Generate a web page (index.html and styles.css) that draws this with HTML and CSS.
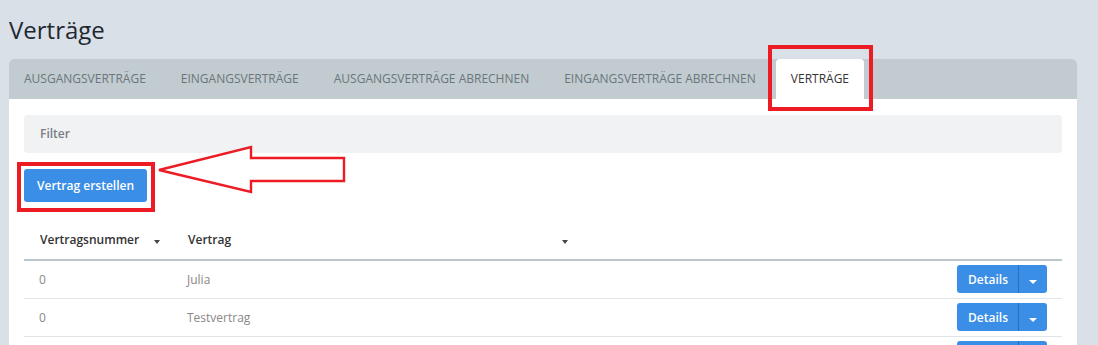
FILE: index.html
```html
<!DOCTYPE html>
<html lang="de">
<head>
  <meta charset="UTF-8" />
  <title>Verträge</title>
  <link rel="stylesheet" href="styles.css">
</head>
<body>
  <div class="page">
    <h1 class="title">Verträge</h1>

    <div class="card">
      <div class="tabs">
        <div class="tab">Ausgangsverträge</div>
        <div class="tab">Eingangsverträge</div>
        <div class="tab">Ausgangsverträge abrechnen</div>
        <div class="tab">Eingangsverträge abrechnen</div>
        <div class="tab active">Verträge</div>
      </div>

      <div class="card-body">
        <div class="filter">Filter</div>

        <div class="actions">
          <button class="btn">Vertrag erstellen</button>
        </div>

        <table class="list">
          <thead>
            <tr>
              <th class="col-nr"><span>Vertragsnummer</span><span class="caret"></span></th>
              <th class="col-name"><span>Vertrag</span><span class="caret"></span></th>
              <th></th>
            </tr>
          </thead>
          <tbody>
            <tr>
              <td>0</td>
              <td>Julia</td>
              <td class="cell-btn">
                <div class="split"><button class="split-main">Details</button><button class="split-caret"><span class="caret light"></span></button></div>
              </td>
            </tr>
            <tr>
              <td>0</td>
              <td>Testvertrag</td>
              <td class="cell-btn">
                <div class="split"><button class="split-main">Details</button><button class="split-caret"><span class="caret light"></span></button></div>
              </td>
            </tr>
            <tr>
              <td></td>
              <td></td>
              <td class="cell-btn">
                <div class="split"><button class="split-main blank"></button><button class="split-caret"></button></div>
              </td>
            </tr>
          </tbody>
        </table>
      </div>
    </div>
  </div>

  <!-- annotations drawn over the screenshot -->
  <div class="mark mark-tab"></div>
  <div class="mark mark-btn"></div>
  <svg class="arrow" width="200" height="60" viewBox="0 0 200 60">
    <polygon points="3,26 95,3 95,14 188,14 188,37 95,37 95,48" fill="#fff" stroke="#ed1c24" stroke-width="2.4"/>
  </svg>
</body>
</html>
```

FILE: styles.css
```css
* {
  box-sizing: border-box;
}

body {
  margin: 0;
  font-family: 'Open Sans', sans-serif;
  background: #d9e0e7;
  height: 345px;
  overflow: hidden;
}

.page {
  padding: 0 21px 0 9px;
}

.title {
  margin: 0;
  padding-top: 12px;
  height: 59px;
  font-size: 24px;
  font-weight: 400;
  line-height: 36px;
  color: #1f2830;
}

.card {
  background: #fff;
  border-radius: 5px;
  overflow: hidden;
  height: 400px;
}

.tabs {
  display: flex;
  background: #c1cbd0;
  height: 40px;
}

.tab {
  padding: 0 15px;
  margin-right: 5px;
  line-height: 40px;
  font-size: 12px;
  text-transform: uppercase;
  color: #6b767c;
  white-space: nowrap;
}

.tab.active {
  background: #fff;
  color: #333;
  border-radius: 4px 4px 0 0;
}

.card-body {
  padding: 16px 15px;
}

.filter {
  background: #f1f2f4;
  border-radius: 4px;
  height: 38px;
  line-height: 38px;
  padding-left: 16px;
  font-size: 12px;
  font-weight: 600;
  color: #7a7f84;
}

.actions {
  margin-top: 16px;
}

.btn {
  height: 33px;
  padding: 0 13px;
  border: none;
  border-radius: 3px;
  background: #3a8ee6;
  color: #fff;
  font-family: inherit;
  font-size: 12px;
  font-weight: 600;
}

.list {
  width: 100%;
  border-collapse: collapse;
  margin-top: 17px;
  font-size: 12px;
}

.list th {
  text-align: left;
  font-weight: 600;
  color: #333;
  height: 41px;
  padding: 0 16px;
  border-bottom: 2px solid #bcc7cd;
}

.col-nr {
  width: 148px;
}

.col-name {
  width: 408px;
}

.list th .caret {
  float: right;
  margin-top: 9px;
  margin-right: -4px;
  border-left-width: 3.5px;
  border-right-width: 3.5px;
}

.caret {
  display: inline-block;
  width: 0;
  height: 0;
  border-left: 4px solid transparent;
  border-right: 4px solid transparent;
  border-top: 4px solid #444;
}

.caret.light {
  border-top-color: #fff;
}

.list td {
  height: 38px;
  padding: 0 16px 0 15px;
  color: #888;
  border-bottom: 1px solid #e0e5e9;
}

.cell-btn {
  text-align: right;
  padding-right: 15px !important;
}

.split {
  display: inline-flex;
  vertical-align: middle;
}

.split button {
  height: 28px;
  border: none;
  background: #3a8ee6;
  color: #fff;
  font-family: inherit;
  font-size: 12px;
  font-weight: 600;
}

.split-main {
  padding: 0 10px 0 11px;
  border-radius: 3px 0 0 3px;
}

.split-main.blank {
  width: 61px;
}

.split .split-caret {
  width: 29px;
  padding: 0;
  border-left: 1px solid #2a6fb8;
  border-radius: 0 3px 3px 0;
}

.mark {
  position: absolute;
  border: 4px solid #ed1c24;
}

.mark-tab {
  left: 768px;
  top: 45px;
  width: 105px;
  height: 66px;
}

.mark-btn {
  left: 17px;
  top: 162px;
  width: 138px;
  height: 50px;
}

.arrow {
  position: absolute;
  left: 156px;
  top: 144px;
}
```
